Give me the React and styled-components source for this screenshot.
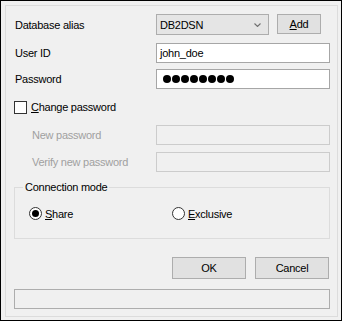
import React from 'react';
import styled, { createGlobalStyle } from 'styled-components';

const GlobalStyle = createGlobalStyle`
  html, body {
    margin: 0;
    padding: 0;
    background: #ffffff;
  }
  * {
    box-sizing: border-box;
  }
`;

const labels = {
  newPassword: 'New password',
  verifyPassword: 'Verify new password',
};

export default function App() {
  return (
    <>
      <GlobalStyle />
      <Window>
        <Frame>
          <FieldRow>
            <Label>Database alias</Label>
            <AliasLine>
              <Combo>
                <span>DB2DSN</span>
                <Chevron width="7" height="4" viewBox="0 0 7 4">
                  <path d="M0.5 0.5 L3.5 3.5 L6.5 0.5" fill="none" stroke="#707070" strokeWidth="1.1" />
                </Chevron>
              </Combo>
              <AddButton>
                <u>A</u>dd
              </AddButton>
            </AliasLine>
          </FieldRow>

          <FieldRow $top={8} $height={20}>
            <Label>User ID</Label>
            <TextBox>john_doe</TextBox>
          </FieldRow>

          <FieldRow $top={6} $height={20}>
            <Label>Password</Label>
            <TextBox>
              <Dots>
                {Array.from({ length: 8 }).map((_, i) => (
                  <Dot key={i} />
                ))}
              </Dots>
            </TextBox>
          </FieldRow>

          <CheckRow>
            <CheckBox />
            <span>
              <u>C</u>hange password
            </span>
          </CheckRow>

          <FieldRow $top={11} $height={20}>
            <Label $disabled $indent>
              {labels.newPassword}
            </Label>
            <TextBox $disabled />
          </FieldRow>

          <FieldRow $top={7} $height={20}>
            <Label $disabled $indent>
              {labels.verifyPassword}
            </Label>
            <TextBox $disabled />
          </FieldRow>

          <GroupBox>
            <GroupTitle>Connection mode</GroupTitle>
            <RadioLine>
              <RadioItem>
                <Radio $checked />
                <span>
                  <u>S</u>hare
                </span>
              </RadioItem>
              <RadioItem>
                <Radio />
                <span>
                  <u>E</u>xclusive
                </span>
              </RadioItem>
            </RadioLine>
          </GroupBox>

          <ButtonBar>
            <Button>OK</Button>
            <Button>Cancel</Button>
          </ButtonBar>

          <StatusBar />
        </Frame>
      </Window>
    </>
  );
}

const Window = styled.div`
  width: 342px;
  height: 321px;
  border: 1px solid #000000;
  background: #f0f0f0;
  padding: 4px;
  font-family: 'Liberation Sans', Arial, sans-serif;
  font-size: 11px;
  letter-spacing: -0.25px;
  color: #000000;
`;

const Frame = styled.div`
  width: 333px;
  height: 312px;
  border: 1px solid #dcdcdc;
  padding: 8px 7px 0 9px;
  display: flex;
  flex-direction: column;
`;

const FieldRow = styled.div`
  display: grid;
  grid-template-columns: 141px 1fr;
  align-items: center;
  height: ${p => p.$height || 21}px;
  margin-top: ${p => p.$top || 0}px;
`;

const Label = styled.div`
  color: ${p => (p.$disabled ? '#a0a0a0' : '#000000')};
  padding-left: ${p => (p.$indent ? 17 : 0)}px;
  white-space: nowrap;
`;

const AliasLine = styled.div`
  display: flex;
  align-items: center;
  gap: 8px;
  height: 100%;
`;

const Combo = styled.div`
  width: 113px;
  height: 21px;
  border: 1px solid #adadad;
  background: #e5e5e5;
  display: flex;
  align-items: center;
  justify-content: space-between;
  padding: 0 7px 0 3px;
`;

const Chevron = styled.svg`
  display: block;
`;

const ButtonBase = styled.div`
  display: flex;
  align-items: center;
  justify-content: center;
  border: 1px solid #adadad;
  background: #e1e1e1;
`;

const AddButton = styled(ButtonBase)`
  width: 44px;
  height: 20px;
  margin-top: -1px;
`;

const TextBox = styled.div`
  height: 20px;
  width: 174px;
  border: 1px solid ${p => (p.$disabled ? '#cccccc' : '#a6a6a6')};
  background: ${p => (p.$disabled ? '#f0f0f0' : '#ffffff')};
  display: flex;
  align-items: center;
  padding-left: 3px;
`;

const Dots = styled.div`
  display: flex;
  gap: 1px;
  padding-left: 3px;
`;

const Dot = styled.span`
  width: 8px;
  height: 8px;
  border-radius: 50%;
  background: #000000;
`;

const CheckRow = styled.div`
  display: flex;
  align-items: center;
  gap: 4px;
  height: 14px;
  margin: 11px 0 0 -1px;
`;

const CheckBox = styled.span`
  width: 13px;
  height: 13px;
  border: 1px solid #333333;
  background: #ffffff;
`;

const GroupBox = styled.div`
  position: relative;
  margin: 15px 0 0 -1px;
  height: 52px;
  border: 1px solid #dcdcdc;
  padding: 19px 0 0 14px;
`;

const GroupTitle = styled.span`
  position: absolute;
  top: -7px;
  left: 8px;
  padding: 0 2px;
  background: #f0f0f0;
  line-height: 13px;
`;

const RadioLine = styled.div`
  display: grid;
  grid-template-columns: 143px 1fr;
`;

const RadioItem = styled.div`
  display: flex;
  align-items: center;
  gap: 3px;
  height: 13px;
`;

const Radio = styled.span`
  width: 13px;
  height: 13px;
  border-radius: 50%;
  border: 1px solid #333333;
  background: #ffffff;
  display: flex;
  align-items: center;
  justify-content: center;

  &::after {
    content: '';
    display: ${p => (p.$checked ? 'block' : 'none')};
    width: 7px;
    height: 7px;
    border-radius: 50%;
    background: #000000;
  }
`;

const ButtonBar = styled.div`
  display: flex;
  justify-content: flex-end;
  gap: 9px;
  margin: 18px 1px 0 0;
`;

const Button = styled(ButtonBase)`
  width: 74px;
  height: 22px;
`;

const StatusBar = styled.div`
  margin: 10px 0 0 -1px;
  height: 20px;
  border: 1px solid #adadad;
  background: #f0f0f0;
`;
